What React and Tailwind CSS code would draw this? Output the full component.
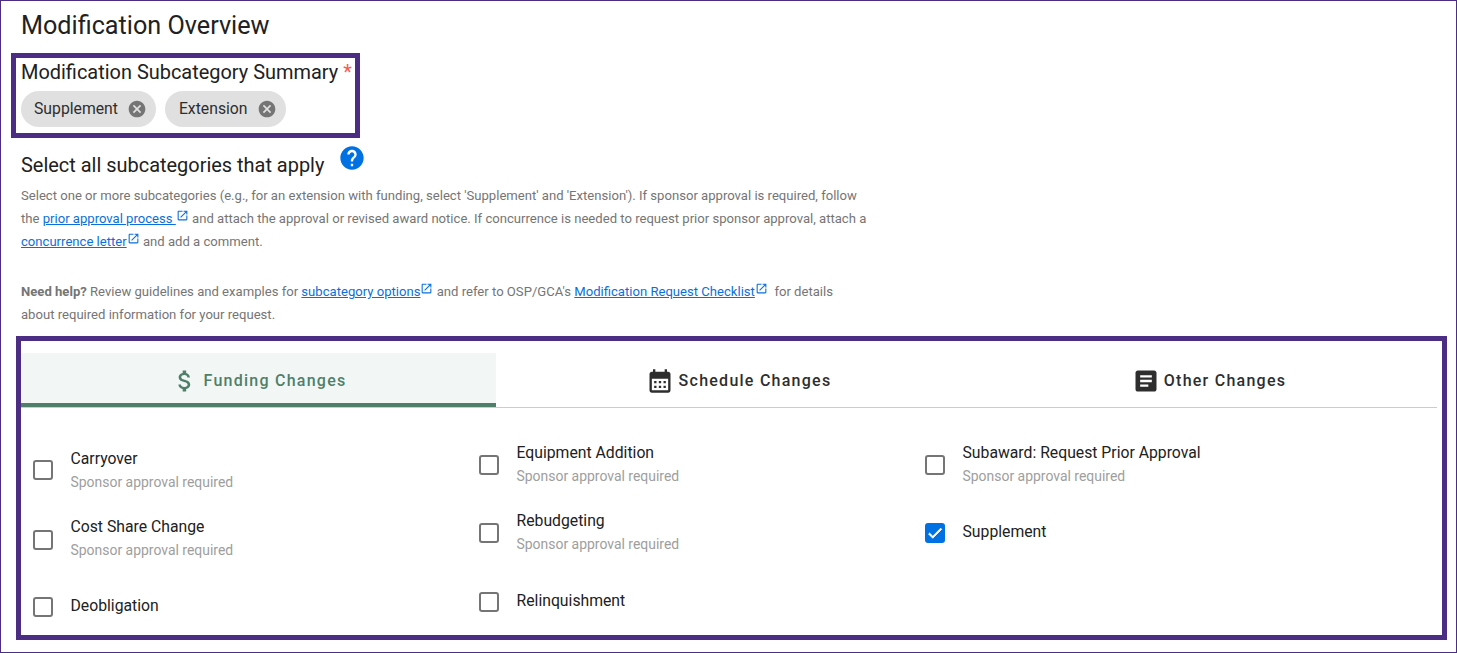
import React from 'react';

const PATHS = {
  money: 'M11.8 10.9c-2.27-.59-3-1.2-3-2.15 0-1.09 1.01-1.85 2.7-1.85 1.78 0 2.44.85 2.5 2.1h2.21c-.07-1.72-1.12-3.3-3.21-3.81V3h-3v2.16c-1.94.42-3.5 1.68-3.5 3.61 0 2.31 1.91 3.46 4.7 4.13 2.5.6 3 1.48 3 2.41 0 .69-.49 1.79-2.7 1.79-2.06 0-2.87-.92-2.98-2.1h-2.2c.12 2.19 1.76 3.42 3.68 3.83V21h3v-2.15c1.95-.37 3.5-1.5 3.5-3.55 0-2.84-2.43-3.81-4.7-4.4z',
  calendar: 'M19 4h-1V2h-2v2H8V2H6v2H5c-1.11 0-1.99.9-1.99 2L3 20c0 1.1.89 2 2 2h14c1.1 0 2-.9 2-2V6c0-1.1-.9-2-2-2zm0 16H5V10h14v10zM9 14H7v-2h2v2zm4 0h-2v-2h2v2zm4 0h-2v-2h2v2zm-8 4H7v-2h2v2zm4 0h-2v-2h2v2zm4 0h-2v-2h2v2z',
  article: 'M19 3H5c-1.1 0-2 .9-2 2v14c0 1.1.9 2 2 2h14c1.1 0 2-.9 2-2V5c0-1.1-.9-2-2-2zm-5 14H7v-2h7v2zm3-4H7v-2h10v2zm0-4H7V7h10v2z',
  cancel: 'M12 2C6.47 2 2 6.47 2 12s4.47 10 10 10 10-4.47 10-10S17.53 2 12 2zm5 13.59L15.59 17 12 13.41 8.41 17 7 15.59 10.59 12 7 8.41 8.41 7 12 10.59 15.59 7 17 8.41 13.41 12 17 15.59z',
  help: 'M12 2C6.48 2 2 6.48 2 12s4.48 10 10 10 10-4.48 10-10S17.52 2 12 2zm1 17h-2v-2h2v2zm2.07-7.75l-.9.92C13.45 12.9 13 13.5 13 15h-2v-.5c0-1.1.45-2.1 1.17-2.83l1.24-1.26c.37-.36.59-.86.59-1.41 0-1.1-.9-2-2-2s-2 .9-2 2H8c0-2.21 1.79-4 4-4s4 1.79 4 4c0 .88-.36 1.68-.93 2.25z',
  external: 'M19 19H5V5h7V3H5c-1.11 0-2 .9-2 2v14c0 1.1.89 2 2 2h14c1.1 0 2-.9 2-2v-7h-2v7zM14 3v2h3.59l-9.83 9.83 1.41 1.41L19 6.41V10h2V3h-7z',
  check: 'M9 16.17 4.83 12l-1.42 1.41L9 19 21 7l-1.41-1.41z',
};

const Icon = ({ name, className }) => (
  <svg viewBox="0 0 24 24" fill="currentColor" className={className}>
    <path d={PATHS[name]} />
  </svg>
);

const ExtLink = ({ children }) => (
  <>
    <a href="#" className="text-[#0a6fdc] underline">{children}</a>
    <Icon name="external" className="inline-block w-[13px] h-[13px] align-[1px] text-[#0a6fdc]" />
  </>
);

const Chip = ({ label, className }) => (
  <div className={`flex items-center h-9 rounded-full bg-[#e0e0e0] pr-[9px] ${className}`}>
    <span className="text-[#2e2e2e] text-[15.75px] leading-none -mt-px">{label}</span>
    <Icon name="cancel" className="w-[20px] h-[20px] ml-[9px] text-[#757575]" />
  </div>
);

const Check = ({ label, note, checked, offset }) => (
  <div className="flex items-center h-[48px]">
    {checked ? (
      <div className="w-5 h-5 rounded-[3px] bg-[#0071e3] flex items-center justify-center shrink-0 mt-[2px]">
        <Icon name="check" className="w-[18px] h-[18px] text-white stroke-white stroke-1" />
      </div>
    ) : (
      <div className={`w-5 h-5 rounded-[3px] border-2 border-[#757575] shrink-0 ${offset || 'mt-[2px]'}`} />
    )}
    <div className="ml-[17.5px] flex flex-col">
      <span className="text-[15.75px] leading-6 text-[#212121]">{label}</span>
      {note && <span className="text-[13.95px] leading-[22px] text-[#9e9e9e]">{note}</span>}
    </div>
  </div>
);

const App = () => {
  return (
    <div className="h-[653px] border border-[#4b2e83] px-[20px] bg-white font-['Roboto',sans-serif] overflow-hidden">
      <h1 className="text-[25.2px] leading-8 pt-[9px] text-[#212121] font-normal">Modification Overview</h1>

      <div className="-ml-[10px] mt-[11px] w-[349px] h-[85px] border-[5px] border-[#4b2e83] pl-[5px]">
        <div className="text-[19.95px] leading-7 text-[#212121]">
          Modification Subcategory Summary <span className="text-[#f75c50]">*</span>
        </div>
        <div className="flex gap-[9px] mt-[5px]">
          <Chip label="Supplement" className="pl-[13px]" />
          <Chip label="Extension" className="pl-[14px]" />
        </div>
      </div>

      <div className="flex items-start mt-[9px]">
        <span className="text-[19.95px] leading-7 text-[#212121] mt-[4px]">Select all subcategories that apply</span>
        <Icon name="help" className="w-7 h-7 ml-[14px] -mt-[3px] text-[#0071e3]" />
      </div>

      <div className="w-[850px] mt-[5px] text-[13.1px] leading-[23px] text-[#757575]">
        <p>
          Select one or more subcategories (e.g., for an extension with funding, select 'Supplement' and 'Extension'). If sponsor approval is required, follow
          <br />
          the <ExtLink>prior approval process </ExtLink> and attach the approval or revised award notice. If concurrence is needed to request prior sponsor approval, attach a{' '}
          <ExtLink>concurrence letter</ExtLink> and add a comment.
        </p>
        <p className="mt-[27px]">
          <strong className="font-bold">Need help?</strong> Review guidelines and examples for <ExtLink>subcategory options</ExtLink> and refer to OSP/GCA's{' '}
          <ExtLink>Modification Request Checklist</ExtLink>&nbsp; for details<br />
          about required information for your request.
        </p>
      </div>

      <div className="-ml-[5px] -mr-[11px] mt-[10px] h-[304px] border-[5px] border-[#4b2e83] pr-[5px] pt-[12px]">
        <div className="grid grid-cols-[475px_485px_456px] h-[55px] border-b border-[#cccccc]">
          <div className="flex items-center justify-center gap-[5px] bg-[#f2f7f5] border-b-4 border-[#4f7f6a] text-[#4f7f6a] h-[54px] pt-[6px]">
            <Icon name="money" className="w-7 h-7" />
            <span className="text-base font-medium tracking-[1.25px]">Funding Changes</span>
          </div>
          <div className="flex items-center justify-center gap-[5px] text-[#2e2e2e] pt-[2px]">
            <Icon name="calendar" className="w-7 h-7" />
            <span className="text-base font-medium tracking-[1.25px]">Schedule Changes</span>
          </div>
          <div className="flex items-center justify-center gap-[4px] text-[#2e2e2e] pt-[2px]">
            <Icon name="article" className="w-7 h-7" />
            <span className="text-base font-medium tracking-[1.25px]">Other Changes</span>
          </div>
        </div>

        <div className="grid grid-cols-[446px_446px_446px] pl-[12px]">
          <div className="flex flex-col gap-[20px] pt-[38px]">
            <Check label="Carryover" note="Sponsor approval required" offset="mt-0" />
            <Check label="Cost Share Change" note="Sponsor approval required" offset="mt-[4px]" />
            <Check label="Deobligation" />
          </div>
          <div className="flex flex-col gap-[20px] pt-[32px]">
            <Check label="Equipment Addition" note="Sponsor approval required" />
            <Check label="Rebudgeting" note="Sponsor approval required" />
            <div className="pt-px">
              <Check label="Relinquishment" />
            </div>
          </div>
          <div className="flex flex-col gap-[20px] pt-[32px]">
            <Check label="Subaward: Request Prior Approval" note="Sponsor approval required" />
            <Check label="Supplement" checked />
          </div>
        </div>
      </div>
    </div>
  );
};

export default App;
